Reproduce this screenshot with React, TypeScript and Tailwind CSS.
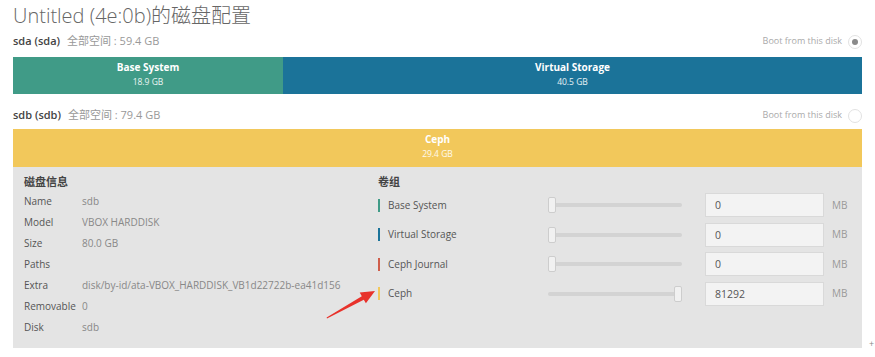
import React from "react";

const diskInfo = [
  ["Name", "sdb"],
  ["Model", "VBOX HARDDISK"],
  ["Size", "80.0 GB"],
  ["Paths", ""],
  ["Extra", "disk/by-id/ata-VBOX_HARDDISK_VB1d22722b-ea41d156"],
  ["Removable", "0"],
  ["Disk", "sdb"],
];

const volumes = [
  { name: "Base System", color: "bg-[#409b87]", value: "0", full: false },
  { name: "Virtual Storage", color: "bg-[#1b7399]", value: "0", full: false },
  { name: "Ceph Journal", color: "bg-[#cf5e4b]", value: "0", full: false },
  { name: "Ceph", color: "bg-[#f2c85b]", value: "81292", full: true },
];

const DiskHeader = ({
  name,
  total,
  checked,
}: {
  name: string;
  total: string;
  checked?: boolean;
}) => (
  <div className="flex h-[16px] items-center justify-between">
    <div className="flex items-center text-[11px] leading-[16px]">
      <span className="font-semibold text-[#444]">{name}</span>
      <span className="ml-[7px] text-[#999]">全部空间 : {total}</span>
    </div>
    <div className="flex items-center">
      <span className="text-[9px] text-[#aaa]">Boot from this disk</span>
      <span className="ml-[6px] mt-[2px] flex h-[14px] w-[14px] items-center justify-center rounded-full border border-[#e2e2e2] bg-white">
        {checked && <span className="h-[6px] w-[6px] rounded-full bg-[#8a8a8a]" />}
      </span>
    </div>
  </div>
);

const Segment = ({
  title,
  size,
  className,
}: {
  title: string;
  size: string;
  className: string;
}) => (
  <div className={`flex flex-col items-center pt-[3px] text-white ${className}`}>
    <span className="text-[10px] font-bold leading-[15px]">{title}</span>
    <span className="text-[8.5px] leading-[13px] text-white/90">{size}</span>
  </div>
);

const Slider = ({ full }: { full: boolean }) => (
  <div className="relative flex h-[16px] w-[134px] items-center">
    <div className="h-[4px] w-full rounded-full bg-[#d3d3d3]" />
    <div
      className={`absolute top-0 h-[16px] w-[8px] rounded-[2px] border border-[#cdcdcd] bg-[#f1f1f1] ${
        full ? "right-0" : "left-0"
      }`}
    />
  </div>
);

export default function App() {
  return (
    <div className="relative h-[357px] w-[875px] overflow-hidden bg-white font-['Open_Sans','Noto_Sans_CJK_SC',sans-serif]">
      <div className="w-[862px] pl-[13px]">
        <h1 className="pt-[2px] text-[20px] font-light leading-[28px] text-[#666]">
          Untitled (4e:0b)的磁盘配置
        </h1>

        <div className="mt-[3px]">
          <DiskHeader name="sda (sda)" total="59.4 GB" checked />
        </div>
        <div className="mt-[8px] flex h-[37px] w-full">
          <Segment title="Base System" size="18.9 GB" className="w-[270px] bg-[#409b87]" />
          <Segment title="Virtual Storage" size="40.5 GB" className="flex-1 bg-[#1b7399]" />
        </div>

        <div className="mt-[13px]">
          <DiskHeader name="sdb (sdb)" total="79.4 GB" />
        </div>
        <div className="mt-[6px] flex h-[38px] w-full">
          <Segment title="Ceph" size="29.4 GB" className="flex-1 bg-[#f2c85b]" />
        </div>

        <div className="flex h-[181px] bg-[#e4e4e4] pl-[11px] pt-[6px]">
          <div className="w-[354px]">
            <h2 className="text-[11px] font-bold leading-[18px] text-[#444]">磁盘信息</h2>
            {diskInfo.map(([label, value]) => (
              <div key={label} className="flex h-[21px] items-center text-[10px]">
                <span className="w-[58px] text-[#555]">{label}</span>
                <span className="text-[#888]">{value}</span>
              </div>
            ))}
          </div>

          <div className="flex-1">
            <h2 className="text-[11px] font-bold leading-[18px] text-[#444]">卷组</h2>
            <div className="mt-[2px] flex flex-col gap-[5.5px]">
              {volumes.map((v) => (
                <div key={v.name} className="flex h-[24px] items-center">
                  <div className="flex w-[170px] items-center">
                    <span className={`h-[13px] w-[2px] ${v.color}`} />
                    <span className="ml-[8px] text-[10px] text-[#555]">{v.name}</span>
                  </div>
                  <Slider full={v.full} />
                  <input
                    readOnly
                    value={v.value}
                    className="ml-[23px] h-[24px] w-[119px] border border-[#d9d9d9] bg-[#f3f3f3] px-[9px] text-[10.5px] text-[#555] outline-none"
                  />
                  <span className="ml-[8px] text-[10px] text-[#999]">MB</span>
                </div>
              ))}
            </div>
          </div>
        </div>
      </div>

      {/* annotation arrow */}
      <svg
        className="pointer-events-none absolute left-0 top-0"
        width="875"
        height="357"
        viewBox="0 0 875 357"
      >
        <polygon
          points="327,318.6 363.8,299.8 365.9,303.3 375,291 359.7,292.6 361.8,296.2 326.6,317.6"
          fill="#e8322b"
        />
      </svg>
      <span className="absolute left-[869px] top-[337px] text-[9px] text-[#888]">+</span>
    </div>
  );
}
